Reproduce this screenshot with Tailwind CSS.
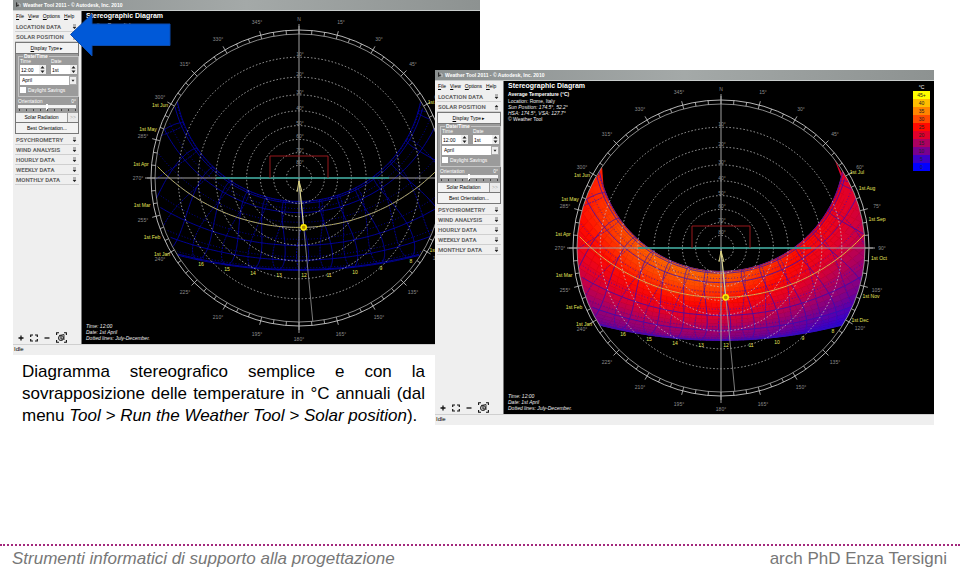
<!DOCTYPE html>
<html lang="it">
<head>
<meta charset="utf-8">
<meta name="viewport" content="width=device-width, initial-scale=1">
<title>Strumenti informatici di supporto alla progettazione</title>
<script src="https://cdn.jsdelivr.net/npm/@tailwindcss/browser@4"></script>
</head>
<body class="relative flex min-h-screen flex-col bg-white font-['Liberation_Sans',Arial,sans-serif] text-black">

<main class="flex-1">
  <div class="ml-[13px] w-[467px]" data-window="plain"></div>
  <p class="ml-[22px] mt-[6px] w-[403px] text-justify text-[17px] leading-[22px]">Diagramma stereografico semplice e con la sovrapposizione delle temperature in °C annuali (dal menu <em>Tool &gt; Run the Weather Tool &gt; Solar position</em>).</p>
  <div class="absolute left-[435px] top-[70px] w-[499px]" data-window="temperature"></div>
  <svg class="absolute left-[69px] top-[12px] h-[46px] w-[103px]" viewBox="69 12 103 46" aria-hidden="true">
    <path d="M70.5 34.5 92 14V24H170V45.5H92V56Z" fill="#0059d8" stroke="#0a4bae" stroke-width="1"/>
  </svg>
</main>

<footer class="border-t-2 border-dotted border-[#a3287c] text-[17px] leading-[20px] text-[#777777]">
  <div class="flex justify-between pl-3 pr-[13px] pt-[3px]">
    <em>Strumenti informatici di supporto alla progettazione</em>
    <span>arch PhD Enza Tersigni</span>
  </div>
</footer>

<template id="window">
  <section class="bg-[#efefef]">
    <header class="flex h-[11px] items-center gap-[2px] border-b border-[#c8cccb] bg-linear-to-r from-[#8b9090] via-[#a4a9a8] to-[#8d9291] pl-[2px] text-[5px] font-bold leading-none text-white">
      <svg class="h-[6px] w-[6px]" viewBox="0 0 6 6"><path d="M1 0 5 3 1 5Z" fill="#333"/><path d="M2 2H5V5" stroke="#ddd" stroke-width=".8" fill="none"/></svg>
      <h2>Weather Tool 2011 - © Autodesk, Inc. 2010</h2>
    </header>
    <div class="flex h-[333px]">
      <aside class="flex w-[69px] shrink-0 flex-col border-r border-[#777] pl-[2px] pr-[2px] text-[5px] leading-none">
        <nav class="flex h-[11px] items-center gap-[4px] pl-[1px]">
          <a href="#"><u>F</u>ile</a><a href="#"><u>V</u>iew</a><a href="#"><u>O</u>ptions</a><a href="#"><u>H</u>elp</a>
        </nav>
        <div data-rows="LOCATION DATA,SOLAR POSITION"></div>
        <div class="flex flex-col border border-[#777] bg-[#9b9b9b] text-white">
          <button class="h-[11px] border-b border-[#777] bg-[#f2f2f2] text-center text-black"><u>D</u>isplay Type ▸</button>
          <fieldset class="mx-[2px] h-[43px] border border-[#c4c4c4] px-[1px]">
            <legend class="ml-[3px] h-[5px] px-[1px] font-bold">Date/Time</legend>
            <div class="flex gap-[4px]">
              <label class="block w-[27px]">Time<span class="mt-[1px] flex"><input class="h-[9px] w-[19px] bg-white pl-[1px] text-black" value="12:00"><svg class="h-[9px] w-[7px] bg-[#eee]" viewBox="0 0 7 9"><path d="M1.5 3.5 3.5 1 5.500 3.500ZM1.500 5.500H5.500L3.500 8Z" fill="#222"/></svg></span></label>
              <label class="block w-[26px]">Date<span class="mt-[1px] flex"><input class="h-[9px] w-[19px] bg-white pl-[1px] text-black" value="1st"><svg class="h-[9px] w-[7px] bg-[#eee]" viewBox="0 0 7 9"><path d="M1.500 3.500 3.500 1 5.500 3.500ZM1.500 5.500H5.500L3.500 8Z" fill="#222"/></svg></span></label>
            </div>
            <div class="relative mt-[2px]">
              <select aria-label="Month" class="block h-[9px] w-full appearance-none bg-white pl-[2px] text-black"><option>April</option></select>
              <svg class="pointer-events-none absolute right-0 top-0 h-[9px] w-[8px] border border-[#aaa] bg-[#eee]" viewBox="0 0 8 9"><path d="M2 3.500H6L4 6Z" fill="#222"/></svg>
            </div>
            <label class="mt-[2px] flex items-center gap-[2px]"><input type="checkbox" class="h-[6px] w-[6px] appearance-none bg-white"><span>Daylight Savings</span></label>
          </fieldset>
          <label class="block h-[16px] px-[2px] pt-[2px]"><span class="flex justify-between"><span>Orientation</span><span>0°</span></span>
            <input type="range" class="mt-[1px] block h-[3px] w-full appearance-none bg-[#f4f4f4] [&::-webkit-slider-thumb]:h-[6px] [&::-webkit-slider-thumb]:w-[2px] [&::-webkit-slider-thumb]:appearance-none [&::-webkit-slider-thumb]:bg-white">
            <svg class="mt-[1px] h-[2px] w-full" viewBox="0 0 58 2" preserveAspectRatio="none"><path d="M1 1H58" stroke="#444" stroke-width="2" stroke-dasharray="1 6"/></svg>
          </label>
          <div class="flex h-[10px] border-b border-[#777] text-black"><button class="flex-1 border-r border-[#999] bg-[#f2f2f2]">Solar Radiation</button><button class="w-[10px] bg-[#eaeaea] text-[#aaa]">&gt;&gt;</button></div>
          <button class="h-[10px] bg-[#f2f2f2] text-black">Best Orientation...</button>
        </div>
        <div class="pt-[1px]" data-rows="PSYCHROMETRY,WIND ANALYSIS,HOURLY DATA,WEEKLY DATA,MONTHLY DATA"></div>
        <div class="mt-auto flex h-[13px] items-center gap-[5px] pl-[2px]">
          <button aria-label="Zoom in"><svg class="h-[8px] w-[8px]" viewBox="0 0 8 8"><path d="M1.500 4H6.500M4 1.500V6.500" stroke="#111" stroke-width="1.300"/></svg></button>
          <button aria-label="Fit"><svg class="h-[8px] w-[8px]" viewBox="0 0 8 8"><path d="M.700 3V1H3M5 1H7.300V3M7.300 5V7H5M3 7H.700V5" fill="none" stroke="#111" stroke-width="1.200"/></svg></button>
          <button aria-label="Zoom out"><svg class="h-[8px] w-[8px]" viewBox="0 0 8 8"><path d="M1.500 4H6.500" stroke="#111" stroke-width="1.300"/></svg></button>
          <button aria-label="Fit diagram"><svg class="h-[11px] w-[11px]" viewBox="0 0 11 11"><path d="M.600 3V.700H3M8 .700H10.400V3M10.400 8V10.300H8M3 10.300H.600V8" fill="none" stroke="#111" stroke-width="1.100"/><circle cx="5" cy="6" r="2.600" fill="#bbb" stroke="#222" stroke-width=".9"/><path d="M3 3.500 8 2.500V8M5 4V7H7" fill="none" stroke="#222" stroke-width=".9"/></svg></button>
        </div>
      </aside>
      <div class="relative min-w-0 flex-1 overflow-hidden bg-black text-[5px] leading-[6px] text-[#eeeeee]">
        <svg data-diagram class="h-[333px] w-[430px]" viewBox="-217 -167 430 333" font-family="Liberation Sans, Arial, sans-serif"></svg>
        <div class="absolute left-[4px] top-0">
          <h3 class="text-[7px] font-bold leading-[10px] text-white">Stereographic Diagram</h3>
          <div data-info></div>
        </div>
        <div class="absolute bottom-[3px] left-[4px] italic"><p>Time: 12:00</p><p>Date: 1st April</p><p>Dotted lines: July-December.</p></div>
        <div data-legend></div>
      </div>
    </div>
    <div class="h-[11px] border-t border-[#cfcfcf] pl-[1px] pt-[1px] text-[6px] leading-[7px] text-black">Idle</div>
  </section>
</template>

<template id="row">
  <button class="flex h-[10px] w-full items-center justify-between border-b border-[#cfcfcf] pl-[1px] pr-[2px] font-[Roboto,sans-serif] text-[6px] font-bold leading-none text-[#666666]">
    <span></span><svg class="h-[6px] w-[5px]" viewBox="0 0 5 6"><path d="M1 1H4M1 3H4L2.500 4.800Z" fill="#222" stroke="#222" stroke-width=".6"/></svg>
  </button>
</template>

<template id="info-temperature">
  <p class="font-bold leading-[7px] text-white">Average Temperature (°C)</p><p>Location: Rome, Italy</p><p class="italic">Sun Position: 174.5°, 52.2°</p><p class="italic">HSA: 174.5°, VSA: 127.7°</p><p>© Weather Tool</p>
</template>

<template id="legend-temperature">
  <div class="absolute right-[4px] top-[2px] w-[17px] text-center text-[5px] leading-[8px] text-[#222222]">
    <div class="text-white">°C</div>
    <div class="bg-[#ffff00]">45+</div><div class="bg-[#ffbd00]">40</div><div class="bg-[#ff8400]">35</div><div class="bg-[#ff4a00]">30</div><div class="bg-[#ff0a00]">25</div><div class="bg-[#e1002b]">20</div><div class="bg-[#ac0060]">15</div><div class="bg-[#78008e]">10</div><div class="bg-[#3c00c8]">5</div><div class="bg-[#0000ff]">0</div>
  </div>
</template>

<script>
const R = 144, LAT = 41.9, rad = Math.PI / 180;
const FIRST = [1, 32, 60, 91, 121, 152, 182, 213, 244, 274, 305, 335];

// Stereographic position of the sun for a day number and a clock hour.
function sun(day, hour) {
  const b = 360 * (day - 81) / 364 * rad;
  const eot = 9.87 * Math.sin(2 * b) - 7.53 * Math.cos(b) - 1.5 * Math.sin(b);
  const d = 23.45 * Math.sin(360 * (284 + day) / 365 * rad) * rad;
  const h = (15 * (hour - 12) - 2.5 + eot / 4) * rad, l = LAT * rad;
  const up = Math.sin(l) * Math.sin(d) + Math.cos(l) * Math.cos(d) * Math.cos(h);
  const east = -Math.cos(d) * Math.sin(h);
  const north = Math.cos(l) * Math.sin(d) - Math.sin(l) * Math.cos(d) * Math.cos(h);
  return { x: R * east / (1 + up), y: -R * north / (1 + up), up, s: d / rad / 23.45 };
}
function track(points) {
  let out = '', pen = false;
  for (const p of points) {
    if (p.up < 0) { pen = false; continue; }
    out += (pen ? 'L' : 'M') + p.x.toFixed(1) + ' ' + p.y.toFixed(1);
    pen = true;
  }
  return out;
}
const range = (a, b, step) => { const r = []; for (let i = a; i <= b + 1e-6; i += step) r.push(i); return r; };
const dayTrack = day => track(range(4, 20, 0.1).map(h => sun(day, h)));
const polar = (az, r) => [r * Math.sin(az * rad), -r * Math.cos(az * rad)];

const SCALE = [[0,0,255],[60,0,200],[120,0,142],[172,0,96],[225,0,43],[255,10,0],[255,74,0],[255,132,0]];
function colour(t) {
  const k = Math.max(0, Math.min(6.99, t / 5)), i = Math.floor(k), f = k - i;
  return 'rgb(' + SCALE[i].map((v, j) => Math.round(v + (SCALE[i + 1][j] - v) * f)).join() + ')';
}
function field() {
  let s = '<clipPath id="sky"><circle r="144"/></clipPath><g clip-path="url(#sky)">';
  s += '<path d="M-119-82-136-45-118-40-117-55Z" fill="#ff1c00"/><path d="M113-90 138-42 124-40 122-66Z" fill="#e3002c"/>';
  for (let n = -10; n < 172; n += 7) for (let h = 4.5; h < 19.5; h += 0.25) {
    const q = [sun(n, h), sun(n, h + 0.25), sun(n + 7, h + 0.25), sun(n + 7, h)];
    if (q.every(p => p.up < 0)) continue;
    const k = q[0].s;
    const t = 19 + 11 * k - 4 * k * k + 7 * Math.cos((h - 14) / 12 * Math.PI);
    const c = colour(t);
    s += `<polygon points="${q.map(p => p.x.toFixed(1) + ',' + p.y.toFixed(1)).join(' ')}" fill="${c}" stroke="${c}" stroke-width=".6"/>`;
  }
  return s + '</g>';
}
function diagram(heat) {
  let s = heat ? field() : '';
  const grid = heat ? '#3010c0' : '#0000c4';
  s += `<g fill="none" stroke="${grid}" stroke-width=".9" opacity=".85">`;
  for (const n of [-10, ...FIRST.slice(0, 6), 172]) s += `<path d="${dayTrack(n)}"/>`;
  for (const n of FIRST.slice(6)) s += `<path d="${dayTrack(n)}" stroke-dasharray="1 2"/>`;
  for (let h = 5; h < 20; h++) {
    s += `<path d="${track(range(-10, 172, 2).map(n => sun(n, h)))}"/>`;
    s += `<path d="${track(range(172, 355, 2).map(n => sun(n, h)))}" stroke-dasharray="2 1"/>`;
  }
  s += '</g><g fill="none" stroke="#c8c8c8">';
  for (let a = 10; a < 90; a += 10) s += `<circle r="${(R * Math.tan((90 - a) / 2 * rad)).toFixed(1)}" stroke-width=".8" stroke-dasharray="1.500 2"/>`;
  s += '<circle r="144" stroke-width=".8" stroke="#aaa"/><circle r="148" stroke-width=".9"/>';
  for (let a = 0; a < 360; a += 5) {
    const [x1, y1] = polar(a, 144), [x2, y2] = polar(a, a % 15 ? 148 : 152);
    s += `<path d="M${x1} ${y1}L${x2} ${y2}" stroke-width=".8"/>`;
  }
  s += '<path d="M-154 0H154M0-154V155" stroke="#a0a0a0" stroke-width="1"/>';
  s += '<path d="M-83 0H90" stroke="#2c9c90" stroke-width="1.300"/>';
  s += '<path d="M-29 0V-22H29V0" stroke="#98181c" stroke-width="1"/>';
  s += '<path d="M0 0 13.800 143.300" stroke="#999" stroke-width=".8"/></g>';
  s += `<path d="${dayTrack(91)}" fill="none" stroke="${heat ? '#ffae28' : '#b8b04c'}" stroke-width="1"/>`;
  s += '<path d="M0 3 4.700 49" stroke="#e0d890" stroke-width="1"/><path d="M0 3-2 14M0 3 3 14" stroke="#d8d080" stroke-width="1"/>';
  s += '<circle cx="4.700" cy="49.300" r="2.600" fill="#b09000" stroke="#ffee00" stroke-width="1.500"/>';
  s += '<g fill="#8c8c8c" font-size="5" text-anchor="middle">';
  for (let a = 15; a < 360; a += 15) { const [x, y] = polar(a, 161); s += `<text x="${x.toFixed(0)}" y="${(y + 2).toFixed(0)}">${a}°</text>`; }
  s += '<text x="0" y="-157">N</text>';
  for (let a = 10; a < 90; a += 10) s += `<text x="1" y="${(-R * Math.tan((90 - a) / 2 * rad) - 1).toFixed(0)}">${a}°</text>`;
  s += '</g><g fill="#e6e65a" font-size="5" text-anchor="middle">';
  for (const [t, x, y] of [['1st Jun',-139,-71],['1st May',-151,-47],['1st Apr',-158,-12],['1st Mar',-157,29],['1st Feb',-147,61],['1st Jan',-137,78],['1st Jul',136,-74],['1st Aug',146,-58],['1st Sep',156,-27],['1st Oct',158,12],['1st Nov',150,50],['1st Dec',139,74],
    ['16',-98,88],['15',-72,93],['14',-46,97],['13',-20,99],['12',5,99],['11',30,99],['10',56,96],['9',82,92],['8',112,85]])
    s += `<text x="${x}" y="${y}">${t}</text>`;
  return s + '</g>';
}

const byId = id => document.getElementById(id).content.cloneNode(true);
document.querySelectorAll('[data-window]').forEach(host => {
  const heat = host.dataset.window === 'temperature', win = byId('window');
  win.querySelectorAll('[data-rows]').forEach(box => box.dataset.rows.split(',').forEach(name => {
    const row = byId('row');
    row.querySelector('span').textContent = name;
    if (name === 'SOLAR POSITION') row.querySelector('path').setAttribute('d', 'M1 5H4M1 3H4L2.500 1.200Z');
    box.append(row);
  }));
  win.querySelector('[data-diagram]').innerHTML = diagram(heat);
  if (heat) {
    win.querySelector('[data-info]').append(byId('info-temperature'));
    win.querySelector('[data-legend]').append(byId('legend-temperature'));
  } else {
    win.querySelector('[data-info]').innerHTML = '<p class="pt-[1px]">Location: Rome, Italy</p>';
  }
  host.append(win);
});
</script>
</body>
</html>
